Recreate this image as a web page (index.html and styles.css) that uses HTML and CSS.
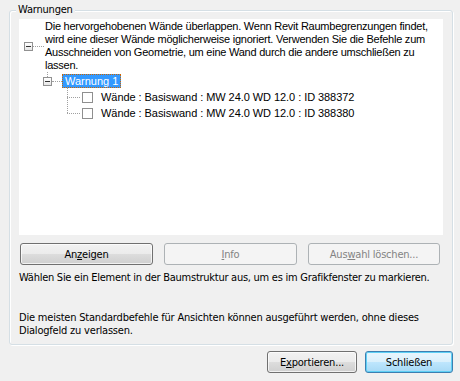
FILE: index.html
```html
<!DOCTYPE html>
<html lang="de">
<head>
<meta charset="UTF-8">
<title>Warnungen</title>
<link rel="stylesheet" href="styles.css">
</head>
<body>
  <div class="group">
    <span class="group-label">Warnungen</span>

    <div class="tree">
      <div class="node node-desc">
        <span class="expander"></span>
        <span class="hline hline-desc"></span>
        <span class="desc">Die hervorgehobenen Wände überlappen. Wenn Revit Raumbegrenzungen findet,<br>wird eine dieser Wände möglicherweise ignoriert. Verwenden Sie die Befehle zum<br>Ausschneiden von Geometrie, um eine Wand durch die andere umschließen zu<br>lassen.</span>
      </div>
      <div class="node node-warning">
        <span class="expander expander-child"></span>
        <span class="hline hline-warning"></span>
        <span class="selected">Warnung 1</span>
      </div>
      <div class="children">
        <div class="leaf">
          <span class="hline hline-leaf"></span>
          <span class="check"></span>
          <span class="leaf-text">Wände : Basiswand : MW 24.0 WD 12.0 : ID 388372</span>
        </div>
        <div class="leaf">
          <span class="hline hline-leaf"></span>
          <span class="check"></span>
          <span class="leaf-text">Wände : Basiswand : MW 24.0 WD 12.0 : ID 388380</span>
        </div>
      </div>
    </div>

    <div class="actions">
      <button class="btn btn-show">An<u>z</u>eigen</button>
      <button class="btn btn-info" disabled><u>I</u>nfo</button>
      <button class="btn btn-clear" disabled>Aus<u>w</u>ahl löschen...</button>
    </div>

    <p class="hint">Wählen Sie ein Element in der Baumstruktur aus, um es im Grafikfenster zu markieren.</p>
    <p class="note">Die meisten Standardbefehle für Ansichten können ausgeführt werden, ohne dieses<br>Dialogfeld zu verlassen.</p>
  </div>

  <div class="footer">
    <button class="btn btn-export">E<u>x</u>portieren...</button>
    <button class="btn btn-default btn-close">Schließen</button>
  </div>
</body>
</html>
```

FILE: styles.css
```css
/* Dialog frame */
body {
  margin: 0;
  width: 460px;
  height: 381px;
  overflow: hidden;
  background: #f0f0f0;
  color: #000;
  font-family: "DejaVu Sans Condensed", "DejaVu Sans", sans-serif;
  font-size: 11px;
  letter-spacing: -0.2px;
  white-space: nowrap;
}

.group {
  position: relative;
  margin: 10px 7px 0 9px;
  padding: 8px 9px 7px 9px;
  border: 1px solid #d5dfe5;
  border-radius: 3px;
  box-shadow: inset 1px 1px 0 #fff, 1px 1px 0 #fff;
}
.group-label {
  position: absolute;
  top: -8px;
  left: 6px;
  padding: 0 2px;
  line-height: 14px;
  background: #f0f0f0;
}

/* Tree view */
.tree {
  height: 216px;
  padding-top: 1px;
  box-sizing: border-box;
  overflow: hidden;
  background: #fff;
  font-family: "Liberation Sans", Arial, sans-serif;
  font-size: 11px;
  line-height: 13px;
  letter-spacing: 0;
}
.node {
  display: flex;
  align-items: center;
}
.node-desc {
  padding-left: 5px;
}
.node-warning {
  margin-top: 2px;
  padding-left: 24px;
}
.expander {
  position: relative;
  flex: none;
  width: 9px;
  height: 9px;
  box-sizing: border-box;
  border: 1px solid #919191;
  background: linear-gradient(#fff, #e6e6e6);
}
.expander::after {
  content: "";
  position: absolute;
  left: 1px;
  top: 3px;
  width: 5px;
  height: 1px;
  background: #333;
}
.expander-child::before {
  content: "";
  position: absolute;
  left: 3px;
  top: -6px;
  height: 5px;
  border-left: 1px dotted #a0a0a0;
}
.hline {
  flex: none;
  height: 0;
  border-top: 1px dotted #a0a0a0;
}
.hline-desc {
  width: 11px;
}
.desc {
  margin-left: 1px;
  letter-spacing: -0.24px;
}
.hline-warning {
  width: 10px;
}
.selected {
  padding: 0 2px;
  line-height: 12px;
  color: #fff;
  background: #3399ff;
  border: 1px dotted #cc6600;
}
.children {
  position: relative;
  margin-left: 48px;
  padding-top: 1px;
}
.children::before {
  content: "";
  position: absolute;
  left: 0;
  top: 0;
  height: 25px;
  border-left: 1px dotted #a0a0a0;
}
.leaf {
  display: flex;
  align-items: center;
  height: 16px;
}
.hline-leaf {
  width: 13px;
}
.check {
  flex: none;
  width: 11px;
  height: 11px;
  margin-left: 2px;
  box-sizing: border-box;
  border: 1px solid #8f8f8f;
  background: #fff;
}
.leaf-text {
  margin-left: 8px;
  letter-spacing: -0.06px;
}

/* Buttons */
.btn {
  height: 22px;
  padding: 0;
  box-sizing: border-box;
  border: 1px solid #707070;
  border-radius: 3px;
  background: linear-gradient(#f2f2f2 0%, #ebebeb 50%, #dddddd 51%, #cfcfcf 100%);
  box-shadow: inset 0 0 0 1px rgba(255, 255, 255, 0.7);
  color: #000;
  font: inherit;
  letter-spacing: inherit;
}
.btn:disabled {
  border-color: #adb2b5;
  background: #f4f4f4;
  box-shadow: none;
  color: #838383;
}
.btn-default {
  border-color: #3c7fb1;
  background: linear-gradient(#eaf6fd 0%, #d9f0fc 50%, #bee6fd 51%, #a7d9f5 100%);
  box-shadow: inset 0 0 0 1px #5fd0f5;
}
.actions {
  display: flex;
  gap: 11px;
  margin: 8px 0 0 1px;
}
.btn-show,
.btn-info {
  width: 133px;
}
.btn-clear {
  width: 132px;
}

.hint,
.note {
  margin: 0;
  line-height: 13px;
}
.hint {
  margin-top: 6px;
  letter-spacing: -0.26px;
}
.note {
  margin-top: 27px;
}

.footer {
  display: flex;
  justify-content: flex-end;
  gap: 8px;
  margin: 6px 7px 0 0;
}
.btn-export {
  width: 90px;
}
.btn-close {
  width: 88px;
}
```
